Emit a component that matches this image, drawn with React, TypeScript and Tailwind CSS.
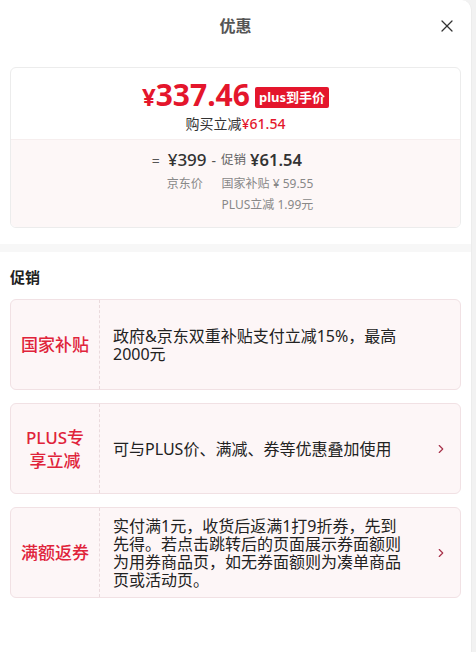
import { X, ChevronRight } from "lucide-react";

const font = { fontFamily: '"Noto Sans", "Noto Sans CJK SC", sans-serif' };

function PromoCard({
  label,
  text,
  arrow,
}: {
  label: React.ReactNode;
  text: string;
  arrow?: boolean;
}) {
  return (
    <div className="flex h-[91px] rounded-[6px] border border-[#f1e1e4] bg-[#fdf6f7]">
      <div className="flex w-[89px] shrink-0 items-center justify-center border-r border-dashed border-[#eadadd] text-center text-[17px] font-medium leading-[23px] text-[#e0233a]">
        {label}
      </div>
      <div className="flex flex-1 items-center pl-[13px] pr-[12px]">
        <p className="w-[295px] text-[16px] leading-[18px] text-[#222]">{text}</p>
        {arrow && (
          <ChevronRight className="ml-auto h-[14px] w-[14px] text-[#a8324a]" strokeWidth={2} />
        )}
      </div>
    </div>
  );
}

export default function App() {
  return (
    <div className="flex h-[652px] w-[476px] bg-[#f2f2f2]" style={font}>
      <div className="flex h-full w-[472px] flex-col rounded-tr-[10px] border-r border-[#ececec] bg-white">
        <header className="relative flex h-[52px] items-center justify-center">
          <h1 className="text-[16px] font-bold text-[#555]">优惠</h1>
          <X className="absolute right-[14px] top-[16px] h-[20px] w-[20px] text-[#333]" strokeWidth={1.5} />
        </header>

        <div className="mx-[10px] mt-[15px] overflow-hidden rounded-[6px] border border-[#ececec]">
          <div className="flex h-[71px] flex-col items-center pt-[9px]">
            <div className="flex items-center">
              <span className="text-[30px] font-bold leading-[36px] text-[#e4162c]">
                <span className="text-[24px]">¥</span>337.46
              </span>
              <span className="ml-[5px] mt-[2px] rounded-[2px] bg-[#e4162c] px-[4px] text-[13px] font-bold leading-[21px] text-white">
                plus到手价
              </span>
            </div>
            <div className="text-[14px] leading-[18px] text-[#333]">
              购买立减<span className="font-medium text-[#e4162c]">¥61.54</span>
            </div>
          </div>
          <div className="flex h-[88px] justify-center border-t border-[#f6eeee] bg-[#fdf7f7] pr-[6px] pt-[8px]">
            <div className="flex">
              <div className="flex flex-col">
                <div className="flex h-[24px] items-center">
                  <span className="mr-[8px] text-[14px] text-[#555]">=</span>
                  <span className="text-[17px] font-medium text-[#333]">¥399</span>
                </div>
                <span className="ml-[15px] mt-[2px] text-[12px] leading-[20px] text-[#888]">京东价</span>
              </div>
              <div className="flex flex-col">
                <div className="flex h-[24px] items-center">
                  <span className="mx-[5px] text-[14px] text-[#555]">-</span>
                  <span className="text-[12.5px] text-[#666]">促销</span>
                  <span className="ml-[4px] text-[16.5px] font-semibold text-[#333]">¥61.54</span>
                </div>
                <span className="ml-[15px] mt-[2px] text-[12px] leading-[20px] text-[#888]">国家补贴 ¥ 59.55</span>
                <span className="ml-[15px] mt-[1px] text-[12px] leading-[20px] text-[#888]">PLUS立减 1.99元</span>
              </div>
            </div>
          </div>
        </div>

        <div className="mt-[16px] h-[8px] bg-[#f7f7f7]" />

        <div className="px-[10px]">
          <h2 className="mt-[15px] text-[15px] font-bold leading-[20px] text-[#222]">促销</h2>
          <div className="mt-[12px] flex flex-col gap-[13px]">
            <PromoCard label="国家补贴" text="政府&京东双重补贴支付立减15%，最高2000元" />
            <PromoCard
              label={
                <>
                  PLUS专
                  <br />
                  享立减
                </>
              }
              text="可与PLUS价、满减、券等优惠叠加使用"
              arrow
            />
            <PromoCard
              label="满额返券"
              text="实付满1元，收货后返满1打9折券，先到先得。若点击跳转后的页面展示券面额则为用券商品页，如无券面额则为凑单商品页或活动页。"
              arrow
            />
          </div>
        </div>
      </div>
    </div>
  );
}
